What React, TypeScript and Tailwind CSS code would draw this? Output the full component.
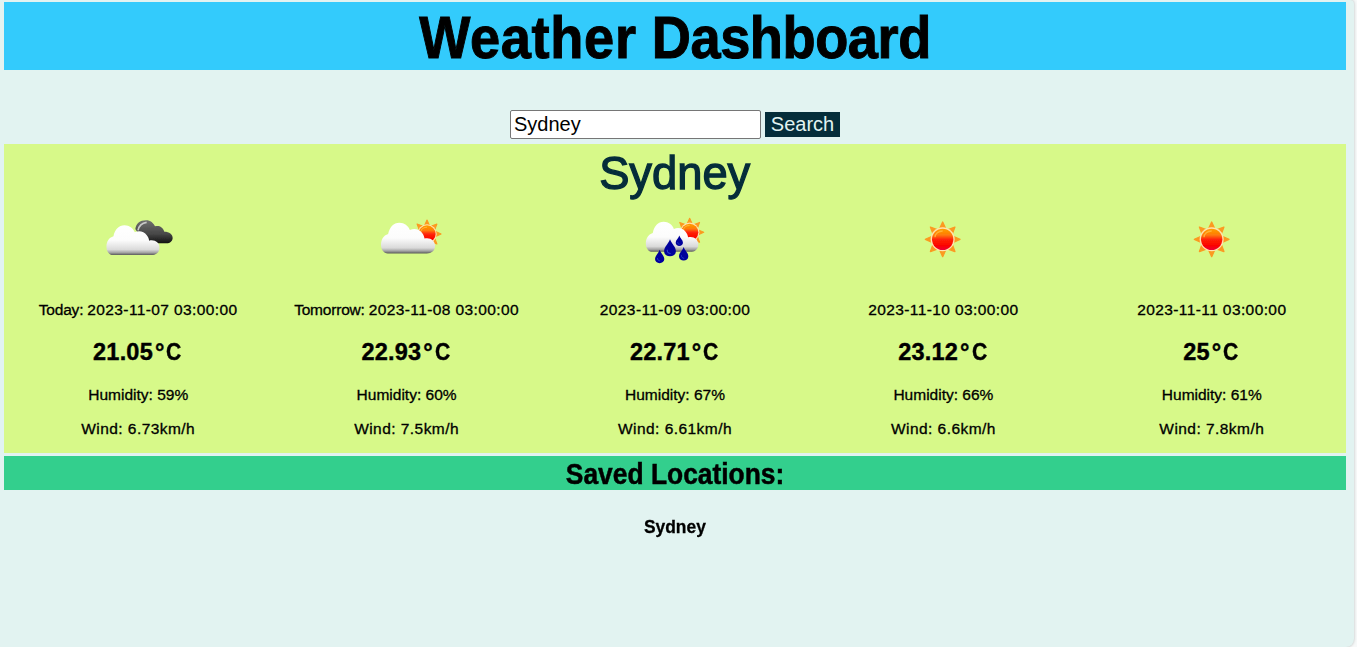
import { useState, type ReactNode } from "react";

const CLOUD =
  "M50 125C50 111 57 98 71 94C75 74 87 61 104 61C119 61 130 70 135 82C147 76 163 79 171 91C176 97 177 102 178 107C195 103 209 113 209 128C209 143 198 150 185 150L70 150C57 150 50 138 50 125Z";
const DROP = "M0 -24C4 -11 17 -3 17 10C17 19 9 25 0 25C-9 25 -17 19 -17 10C-17 -3 -4 -11 0 -24Z";

function Defs({ id }: { id: string }) {
  return (
    <defs>
      <linearGradient id={id + "w"} x1="0" y1="0" x2="0" y2="1">
        <stop offset="0" stopColor="#ffffff" />
        <stop offset="0.5" stopColor="#fcfcfc" />
        <stop offset="0.82" stopColor="#dadada" />
        <stop offset="0.92" stopColor="#a4a4a4" />
        <stop offset="1" stopColor="#5a5a5a" />
      </linearGradient>
      <linearGradient id={id + "k"} x1="0" y1="0" x2="0" y2="1">
        <stop offset="0" stopColor="#707070" />
        <stop offset="0.6" stopColor="#464646" />
        <stop offset="1" stopColor="#111111" />
      </linearGradient>
      <linearGradient id={id + "s"} x1="0" y1="0" x2="0" y2="1">
        <stop offset="0" stopColor="#ffa000" />
        <stop offset="0.3" stopColor="#ff7a08" />
        <stop offset="0.5" stopColor="#ff2408" />
        <stop offset="0.8" stopColor="#fb0000" />
        <stop offset="1" stopColor="#ec0038" />
      </linearGradient>
      <filter id={id + "b"} x="-20%" y="-20%" width="140%" height="140%">
        <feGaussianBlur stdDeviation="2" />
      </filter>
    </defs>
  );
}

function Sun({ id, x, y, k }: { id: string; x: number; y: number; k: number }) {
  return (
    <g transform={`translate(${x} ${y}) scale(${k})`}>
      {[0, 45, 90, 135, 180, 225, 270, 315].map((a) => (
        <path
          key={a}
          d="M-10 -30L0 -52L10 -30Z"
          fill="#fb9a20"
          stroke="#fb9a20"
          strokeWidth="4"
          strokeLinejoin="round"
          transform={`rotate(${a})`}
        />
      ))}
      <circle r="36" fill="#ffe3b0" />
      <circle r="32" fill={`url(#${id}s)`} />
      <path d="M-23 -6C-23 -18 -12 -25 0 -25" fill="none" stroke="#ffc34a" strokeWidth="4" opacity="0.7" />
    </g>
  );
}

function Icon({ id, children }: { id: string; children: ReactNode }) {
  return (
    <svg viewBox="-150 0 300 210" className="h-[70px] w-[100px]">
      <Defs id={id} />
      <g filter={`url(#${id}b)`}>{children}</g>
    </svg>
  );
}

function WeatherIcon({ kind, id }: { kind: string; id: string }) {
  if (kind === "broken")
    return (
      <Icon id={id}>
        <path
          d="M-8 72C-6 56 6 46 24 46C38 46 46 54 51 64C62 60 75 66 79 80C94 80 104 88 104 99C104 108 96 115 86 115L20 115Z"
          fill={`url(#${id}k)`}
        />
        <path d="M0 76C3 61 12 54 26 52" fill="none" stroke="#c9c9c9" strokeWidth="5" />
        <path d={CLOUD} transform="translate(-144.6 0)" fill={`url(#${id}w)`} />
      </Icon>
    );
  if (kind === "partly")
    return (
      <Icon id={id}>
        <Sun id={id} x={60} y={87} k={0.81} />
        <path d={CLOUD} transform="translate(-129 -10) scale(1.02 1.035)" fill={`url(#${id}w)`} />
      </Icon>
    );
  if (kind === "rain")
    return (
      <Icon id={id}>
        <Sun id={id} x={44} y={82} k={0.81} />
        <path d={CLOUD} transform="translate(-137 -11) scale(.99 1.01)" fill={`url(#${id}w)`} />
        {[
          [-46, 154, 0.82],
          [-15, 128, 1.04],
          [13, 107, 0.64],
          [26, 146, 0.82],
        ].map(([x, y, k]) => (
          <g key={x} transform={`translate(${x} ${y}) scale(${k})`}>
            <path d={DROP} fill="#00009c" />
            <path d="M-8 6C-8 13 -4 17 2 17" fill="none" stroke="#2740ce" strokeWidth="3" />
          </g>
        ))}
      </Icon>
    );
  return (
    <Icon id={id}>
      <Sun id={id} x={-1} y={103} k={1} />
    </Icon>
  );
}

const days = [
  { kind: "broken", label: "Today:", date: "2023-11-07 03:00:00", temp: "21.05", humidity: "59", wind: "6.73" },
  { kind: "partly", label: "Tomorrow:", date: "2023-11-08 03:00:00", temp: "22.93", humidity: "60", wind: "7.5" },
  { kind: "rain", label: "", date: "2023-11-09 03:00:00", temp: "22.71", humidity: "67", wind: "6.61" },
  { kind: "clear", label: "", date: "2023-11-10 03:00:00", temp: "23.12", humidity: "66", wind: "6.6" },
  { kind: "clear", label: "", date: "2023-11-11 03:00:00", temp: "25", humidity: "61", wind: "7.8" },
];

export default function App() {
  const [query, setQuery] = useState("Sydney");
  return (
    <div className="h-[647px] overflow-hidden bg-[#f7f9f9] pr-[3px] font-['Liberation_Sans',Arial,sans-serif] text-black">
      <div className="h-full rounded-tr-[4px] rounded-br-[8px] bg-[#e2f3f1] pt-[2px] pr-2 pl-1 shadow-[0_0_3px_rgba(0,0,0,0.25)]">
        <h1 className="flex h-[68px] items-center justify-center bg-[#33cbfc] pt-[5px] text-[58.5px] leading-none font-bold whitespace-nowrap [-webkit-text-stroke:1px_black]">
          <span className="inline-block scale-x-[0.927]">
            <span className="tracking-[0.7px]">Weather</span> <span className="tracking-[-0.5px]">Dashboard</span>
          </span>
        </h1>
        <form className="mt-10 flex h-[29px] items-center justify-center gap-1" onSubmit={(e) => e.preventDefault()}>
          <input
            value={query}
            onChange={(e) => setQuery(e.target.value)}
            className="h-[29px] w-[251px] rounded-[2px] border border-[#767676] bg-white px-[3px] text-xl leading-none outline-none"
          />
          <button className="h-[25px] w-[75px] bg-[#052d3a] text-xl leading-[25px] text-[#e2f3f1]">Search</button>
        </form>
        <section className="mt-[5px] h-[309px] bg-[#d7f989]">
          <h2 className="flex h-[61px] items-center justify-center pb-[3px] text-[46px] leading-none text-[#052d3a] [-webkit-text-stroke:1.3px_#052d3a]">
            <span className="inline-block scale-x-[0.985]">Sydney</span>
          </h2>
          <div className="grid grid-cols-5 text-[15.5px] leading-[18px] whitespace-nowrap [-webkit-text-stroke:0.3px_black]">
            {days.map((d, i) => (
              <article key={d.date} className="flex flex-col items-center">
                <WeatherIcon kind={d.kind} id={"day" + i} />
                <p className="mt-[26px] flex gap-1">
                  {d.label && <span className="tracking-[-0.2px]">{d.label}</span>}
                  <span className="tracking-[0.4px]">{d.date}</span>
                </p>
                <p className="mt-[19px] text-[23.5px] leading-7 font-bold [-webkit-text-stroke:0.4px_black]">
                  <span className="tracking-[0.2px]">{d.temp}</span>
                  <span className="ml-0.5 tracking-[2px]">°</span>
                  <span className="inline-block origin-left scale-x-90">C</span>
                </p>
                <p className="mt-5">Humidity: {d.humidity}%</p>
                <p className="mt-4 tracking-[0.45px]">Wind: {d.wind}km/h</p>
              </article>
            ))}
          </div>
        </section>
        <h2 className="mt-[3px] flex h-[34px] items-center justify-center bg-[#33cf8d] pt-[2px] text-[29px] leading-none font-bold whitespace-nowrap [-webkit-text-stroke:0.5px_black]">
          <span className="inline-block scale-x-[0.91]">Saved Locations:</span>
        </h2>
        <p className="mt-[26px] text-center text-[18.5px] leading-[22px] font-bold [-webkit-text-stroke:0.3px_black]">
          <span className="inline-block scale-x-[0.94]">Sydney</span>
        </p>
      </div>
    </div>
  );
}
